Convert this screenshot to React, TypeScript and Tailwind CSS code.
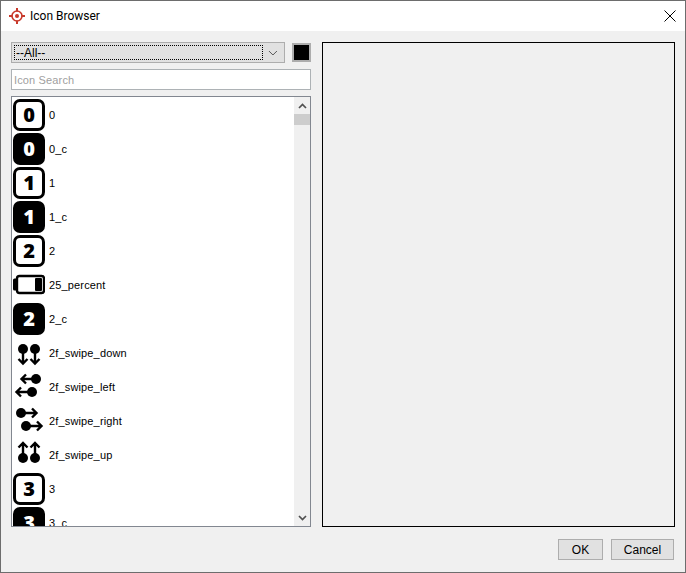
const rowFont = "font-['Liberation_Sans',Arial,sans-serif] text-[11px] tracking-[0.15px] text-black";

function DigitIcon({ digit, filled }: { digit: string; filled?: boolean }) {
  return (
    <div
      className={`flex h-[32px] w-[32px] items-center justify-center rounded-[7px] border-[3px] border-black font-['Open_Sans',sans-serif] text-[20px] leading-none font-extrabold ${
        filled ? "bg-black text-white" : "bg-white text-black"
      }`}
    >
      {digit}
    </div>
  );
}

function BatteryIcon() {
  return (
    <svg width="32" height="32" viewBox="0 0 32 32">
      <rect x="4" y="7" width="27" height="17" rx="2.5" fill="none" stroke="#000" strokeWidth="2.4" />
      <path d="M4 11H1.500v9H4" fill="none" stroke="#000" strokeWidth="3" strokeLinejoin="round" />
      <rect x="22" y="9" width="7" height="13" rx="1" fill="#000" />
    </svg>
  );
}

function SwipeIcon({ kind }: { kind: "down" | "left" | "right" | "up" }) {
  const paths = {
    down: (
      <>
        <circle cx="10" cy="12" r="5" />
        <circle cx="22" cy="12" r="5" />
        <path d="M10 14v12.5M5.5 22l4.5 4.5 4.5-4.5M22 14v12.5M17.5 22l4.5 4.5 4.5-4.5" fill="none" stroke="#000" strokeWidth="2.4" />
      </>
    ),
    left: (
      <>
        <circle cx="23" cy="8" r="5" />
        <circle cx="19" cy="21" r="5" />
        <path d="M23 8H8.500M13 3.500L8.500 8l4.500 4.500M19 21H3.500M8 16.500L3.500 21 8 25.500" fill="none" stroke="#000" strokeWidth="2.4" />
      </>
    ),
    right: (
      <>
        <circle cx="8" cy="8" r="5" />
        <circle cx="13" cy="21" r="5" />
        <path d="M8 8h15.500M19 3.500L23.500 8 19 12.500M13 21h15.500M24 16.500L28.500 21 24 25.500" fill="none" stroke="#000" strokeWidth="2.4" />
      </>
    ),
    up: (
      <>
        <circle cx="10" cy="19" r="5" />
        <circle cx="22" cy="19" r="5" />
        <path d="M10 17V4M5.500 8.500L10 4l4.500 4.500M22 17V4M17.500 8.500L22 4l4.500 4.500" fill="none" stroke="#000" strokeWidth="2.4" />
      </>
    ),
  };
  return (
    <svg width="32" height="32" viewBox="0 0 32 32" fill="#000">
      {paths[kind]}
    </svg>
  );
}

function AppLogo() {
  return (
    <svg width="16" height="16" viewBox="0 0 16 16" fill="none" stroke="#c8392b">
      <circle cx="8" cy="8" r="5" strokeWidth="1.6" />
      <circle cx="8" cy="8" r="2" fill="#c8392b" strokeWidth="0" />
      <path d="M8 0v3.400M8 12.600V16M0 8h3.400M12.600 8H16" strokeWidth="2" />
    </svg>
  );
}

const rows = [
  { label: "0", icon: <DigitIcon digit="0" /> },
  { label: "0_c", icon: <DigitIcon digit="0" filled /> },
  { label: "1", icon: <DigitIcon digit="1" /> },
  { label: "1_c", icon: <DigitIcon digit="1" filled /> },
  { label: "2", icon: <DigitIcon digit="2" /> },
  { label: "25_percent", icon: <BatteryIcon /> },
  { label: "2_c", icon: <DigitIcon digit="2" filled /> },
  { label: "2f_swipe_down", icon: <SwipeIcon kind="down" /> },
  { label: "2f_swipe_left", icon: <SwipeIcon kind="left" /> },
  { label: "2f_swipe_right", icon: <SwipeIcon kind="right" /> },
  { label: "2f_swipe_up", icon: <SwipeIcon kind="up" /> },
  { label: "3", icon: <DigitIcon digit="3" /> },
  { label: "3_c", icon: <DigitIcon digit="3" filled /> },
];

export default function App() {
  return (
    <div className="flex h-[573px] w-[686px] flex-col overflow-hidden border border-[#6d6d6d] bg-[#f0f0f0] font-['Liberation_Sans',Arial,sans-serif]">
      {/* Title bar */}
      <div className="flex h-[30px] shrink-0 items-center bg-white pl-[8px] pr-[9px]">
        <AppLogo />
        <span className="ml-[5px] font-['Roboto',sans-serif] text-[12px] text-black">Icon Browser</span>
        <svg width="12" height="12" viewBox="0 0 12 12" className="ml-auto" fill="none" stroke="#000" strokeWidth="1">
          <path d="M.5.5l11 11M11.500.5l-11 11" />
        </svg>
      </div>

      <div className="flex h-[497px] shrink-0 gap-[11px] pl-[10px] pt-[11px]">
        {/* Left column */}
        <div className="flex w-[300px] flex-col">
          <div className="flex items-center gap-[7px]">
            <div className="flex h-[21px] w-[274px] items-center border border-[#adadad] bg-[#e1e1e1] p-[2px]">
              <div className="flex h-full w-[251px] items-center border border-dotted border-black pl-[1px] text-[12px] text-black">
                --All--
              </div>
              <svg width="18" height="14" viewBox="0 0 18 14" className="ml-[1px]" fill="none" stroke="#555" strokeWidth="1">
                <path d="M5 5l4 4 4-4" />
              </svg>
            </div>
            <div className="h-[19px] w-[19px] border-2 border-[#adadad] bg-black" />
          </div>

          <input
            placeholder="Icon Search"
            className="mt-[6px] h-[21px] w-[300px] border border-[#adb2b5] bg-white px-[2px] text-[11px] tracking-[0.15px] outline-none placeholder:text-[#a0a0a0]"
          />

          <div className="mt-[6px] flex h-[431px] w-[300px] overflow-hidden border border-[#828790] bg-white">
            <div className="w-[282px] overflow-hidden pl-[1px] pt-[1px]">
              {rows.map((row) => (
                <div key={row.label} className="flex h-[34px] items-center gap-[4px]">
                  <div className="flex h-[32px] w-[32px] shrink-0 items-center justify-center">{row.icon}</div>
                  <span className={rowFont}>{row.label}</span>
                </div>
              ))}
            </div>
            {/* Scrollbar */}
            <div className="flex w-[16px] shrink-0 flex-col bg-[#f0f0f0]">
              <div className="flex h-[17px] items-center justify-center">
                <svg width="9" height="6" viewBox="0 0 9 6" fill="none" stroke="#505050" strokeWidth="1.7">
                  <path d="M1 5l3.500-3.500L8 5" />
                </svg>
              </div>
              <div className="h-[11px] bg-[#cdcdcd]" />
              <div className="flex-1" />
              <div className="flex h-[17px] items-center justify-center">
                <svg width="9" height="6" viewBox="0 0 9 6" fill="none" stroke="#505050" strokeWidth="1.7">
                  <path d="M1 1l3.500 3.500L8 1" />
                </svg>
              </div>
            </div>
          </div>
        </div>

        {/* Preview panel */}
        <div className="h-[485px] w-[353px] border border-black bg-[#f0f0f0]" />
      </div>

      {/* Footer buttons */}
      <div className="flex justify-end gap-[8px] pr-[11px] pt-[11px]">
        <button className="h-[21px] w-[45px] border border-[#adadad] bg-[#e1e1e1] text-[12px] text-black">OK</button>
        <button className="h-[21px] w-[63px] border border-[#adadad] bg-[#e1e1e1] text-[12px] text-black">Cancel</button>
      </div>
    </div>
  );
}
